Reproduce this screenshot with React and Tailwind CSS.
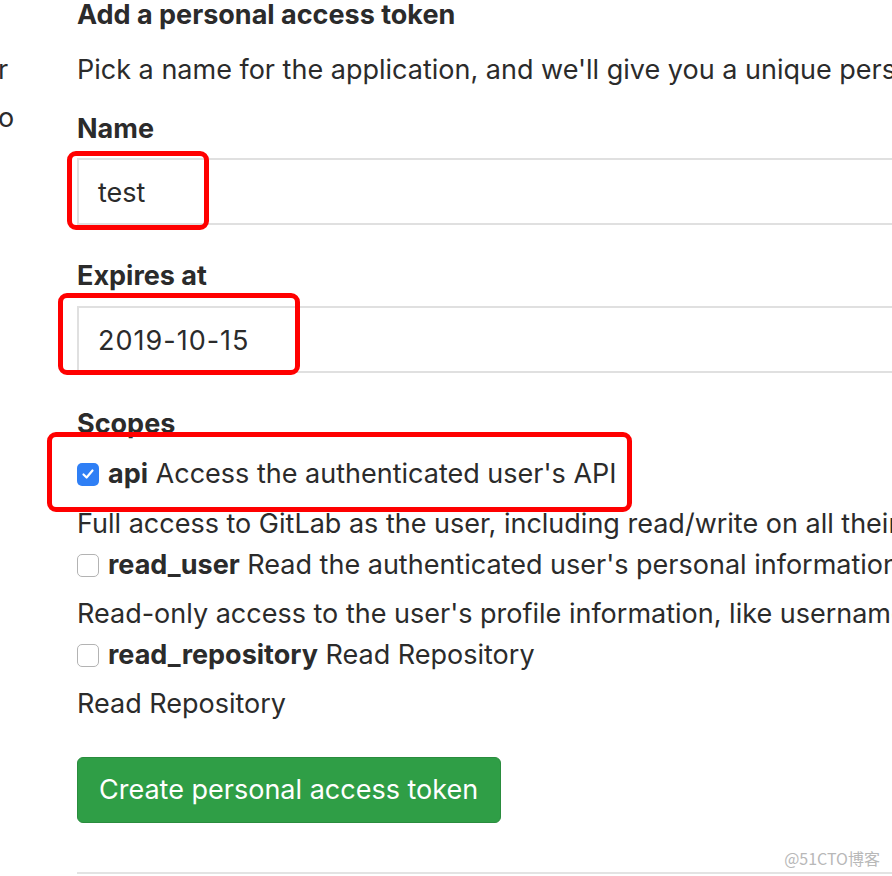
import React from "react";

function Check({ checked }) {
  if (checked) {
    return (
      <span className="w-[22px] h-[23px] rounded-[5px] bg-[#2f7ff5] flex items-center justify-center shrink-0">
        <svg width="14" height="14" viewBox="0 0 14 14" fill="none">
          <path d="M2.5 7.5 L5.6 10.5 L11.5 3.5" stroke="white" strokeWidth="2.2" strokeLinecap="round" strokeLinejoin="round" />
        </svg>
      </span>
    );
  }
  return <span className="w-[22px] h-[23px] rounded-[5px] border-[1.5px] border-[#b3b3b3] bg-white shrink-0" />;
}

export default function App() {
  return (
    <div
      className="relative w-[892px] h-[876px] overflow-hidden bg-white text-[#2b2b2b] whitespace-nowrap"
      style={{ fontFamily: "Inter, 'Noto Sans', sans-serif" }}
    >
      <div className="flex h-full">
        <div className="w-[79px] shrink-0 text-[27px] -ml-[2px]">
          <div className="h-[36px] mt-[52px] leading-[36px]">r</div>
          <div className="h-[36px] mt-[12px] leading-[36px]">o</div>
        </div>
        <div className="flex-1 min-w-0 flex flex-col text-[27px] leading-[36px]">
          <div className="h-[36px] mt-[-3px] font-bold">Add a personal access token</div>
          <div className="h-[36px] mt-[19px]">Pick a name for the application, and we'll give you a unique personal access token.</div>
          <div className="h-[36px] mt-[23px] font-bold">Name</div>
          <div className="h-[67px] mt-[11px] border-2 border-r-0 border-[#e0e0e0] pl-[19px] pt-[3px] flex items-center">test</div>
          <div className="h-[36px] mt-[33px] font-bold">Expires at</div>
          <div className="h-[67px] mt-[12px] border-2 border-r-0 border-[#e0e0e0] pl-[19px] pt-[3px] flex items-center tracking-[1px]">2019-10-15</div>
          <div className="h-[36px] mt-[33px] font-bold">Scopes</div>
          <div className="h-[36px] mt-[14px] flex items-center gap-[9px]">
            <Check checked />
            <span><b>api</b> Access the authenticated user's API</span>
          </div>
          <div className="h-[36px] mt-[14px]">Full access to GitLab as the user, including read/write on all their groups and projects</div>
          <div className="h-[36px] mt-[5px] flex items-center gap-[9px]">
            <Check />
            <span><b>read_user</b> Read the authenticated user's personal information</span>
          </div>
          <div className="h-[36px] mt-[13px]">Read-only access to the user's profile information, like username, public email and full name</div>
          <div className="h-[36px] mt-[5px] flex items-center gap-[9px]">
            <Check />
            <span><b>read_repository</b> Read Repository</span>
          </div>
          <div className="h-[36px] mt-[13px]">Read Repository</div>
          <div className="mt-[35px]">
            <button className="h-[66px] w-[424px] rounded-[6px] bg-[#2f9e46] border border-[#2a8c3e] text-white text-[27px] text-left pl-[21px]">
              Create personal access token
            </button>
          </div>
          <div className="mt-[49px] h-[2px] bg-[#e3e3e3]" />
        </div>
      </div>

      <div className="absolute left-[67px] top-[151px] w-[142px] h-[79px] border-[5px] border-[#ff0000] rounded-[9px]" />
      <div className="absolute left-[58px] top-[293px] w-[242px] h-[82px] border-[5px] border-[#ff0000] rounded-[9px]" />
      <div className="absolute left-[47px] top-[432px] w-[585px] h-[80px] border-[5px] border-[#ff0000] rounded-[9px]" />

      <div className="absolute right-[12px] top-[846px] text-[16px] text-[#b8b8b8]" style={{ fontFamily: "'Liberation Sans Narrow', 'Noto Sans CJK SC', sans-serif" }}>
        @51CTO博客
      </div>
    </div>
  );
}
